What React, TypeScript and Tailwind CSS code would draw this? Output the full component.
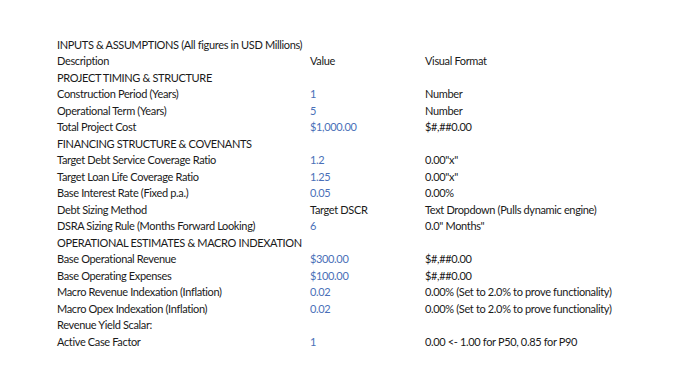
import React from "react";

type Row = [string, string?, string?, boolean?];

const rows: Row[] = [
  ["INPUTS & ASSUMPTIONS (All figures in USD Millions)"],
  ["Description", "Value", "Visual Format", false],
  ["PROJECT TIMING & STRUCTURE"],
  ["Construction Period (Years)", "1", "Number", true],
  ["Operational Term (Years)", "5", "Number", true],
  ["Total Project Cost", "$1,000.00", "$#,##0.00", true],
  ["FINANCING STRUCTURE & COVENANTS"],
  ["Target Debt Service Coverage Ratio", "1.2", '0.00"x"', true],
  ["Target Loan Life Coverage Ratio", "1.25", '0.00"x"', true],
  ["Base Interest Rate (Fixed p.a.)", "0.05", "0.00%", true],
  ["Debt Sizing Method", "Target DSCR", "Text Dropdown (Pulls dynamic engine)", false],
  ["DSRA Sizing Rule (Months Forward Looking)", "6", '0.0" Months"', true],
  ["OPERATIONAL ESTIMATES & MACRO INDEXATION"],
  ["Base Operational Revenue", "$300.00", "$#,##0.00", true],
  ["Base Operating Expenses", "$100.00", "$#,##0.00", true],
  ["Macro Revenue Indexation (Inflation)", "0.02", "0.00% (Set to 2.0% to prove functionality)", true],
  ["Macro Opex Indexation (Inflation)", "0.02", "0.00% (Set to 2.0% to prove functionality)", true],
  ["Revenue Yield Scalar:"],
  ["Active Case Factor", "1", "0.00 <- 1.00 for P50, 0.85 for P90", true],
];

export default function App() {
  return (
    <div
      className="w-[680px] h-[382px] bg-white pt-[36px] pl-[57px] text-[11px] tracking-[-0.35px] text-[#1a1a1a]"
      style={{ fontFamily: "Lato, 'Open Sans', sans-serif" }}
    >
      <div className="grid grid-cols-[253px_115px_1fr] auto-rows-[16.5px] items-center leading-none">
        {rows.map((r, i) => (
          <React.Fragment key={i}>
            <div className={r[1] === undefined ? "col-span-3 whitespace-nowrap" : "whitespace-nowrap"}>{r[0]}</div>
            {r[1] !== undefined && (
              <>
                <div className={r[3] ? "text-[#4a70b8] whitespace-nowrap" : "whitespace-nowrap"}>{r[1]}</div>
                <div className="whitespace-nowrap">{r[2]}</div>
              </>
            )}
          </React.Fragment>
        ))}
      </div>
    </div>
  );
}
